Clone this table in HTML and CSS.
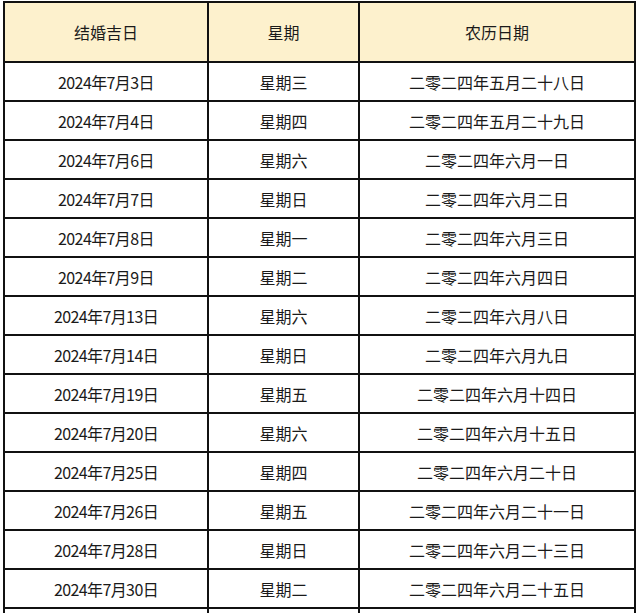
FILE: index.html
```html
<!DOCTYPE html>
<html lang="zh-CN">
<head>
<meta charset="utf-8">
<title>2024年7月结婚吉日</title>
<link rel="stylesheet" href="styles.css">
</head>
<body>
<table class="dates">
  <colgroup>
    <col class="col-date">
    <col class="col-week">
    <col class="col-lunar">
  </colgroup>
  <thead>
    <tr class="head-row">
      <th>结婚吉日</th>
      <th>星期</th>
      <th>农历日期</th>
    </tr>
  </thead>
  <tbody>
    <tr><td class="solar">2024年7月3日</td><td>星期三</td><td>二零二四年五月二十八日</td></tr>
    <tr><td class="solar">2024年7月4日</td><td>星期四</td><td>二零二四年五月二十九日</td></tr>
    <tr><td class="solar">2024年7月6日</td><td>星期六</td><td>二零二四年六月一日</td></tr>
    <tr><td class="solar">2024年7月7日</td><td>星期日</td><td>二零二四年六月二日</td></tr>
    <tr><td class="solar">2024年7月8日</td><td>星期一</td><td>二零二四年六月三日</td></tr>
    <tr><td class="solar">2024年7月9日</td><td>星期二</td><td>二零二四年六月四日</td></tr>
    <tr><td class="solar">2024年7月13日</td><td>星期六</td><td>二零二四年六月八日</td></tr>
    <tr><td class="solar">2024年7月14日</td><td>星期日</td><td>二零二四年六月九日</td></tr>
    <tr><td class="solar">2024年7月19日</td><td>星期五</td><td>二零二四年六月十四日</td></tr>
    <tr><td class="solar">2024年7月20日</td><td>星期六</td><td>二零二四年六月十五日</td></tr>
    <tr><td class="solar">2024年7月25日</td><td>星期四</td><td>二零二四年六月二十日</td></tr>
    <tr><td class="solar">2024年7月26日</td><td>星期五</td><td>二零二四年六月二十一日</td></tr>
    <tr><td class="solar">2024年7月28日</td><td>星期日</td><td>二零二四年六月二十三日</td></tr>
    <tr><td class="solar">2024年7月30日</td><td>星期二</td><td>二零二四年六月二十五日</td></tr>
    <tr><td></td><td></td><td></td></tr>
  </tbody>
</table>
</body>
</html>
```
FILE: styles.css
```css
html, body {
  margin: 0;
  padding: 0;
  background: #ffffff;
  overflow: hidden;
}

body {
  padding: 1px 0 0 3px;
  font-family: "Noto Sans CJK SC", "Noto Sans", sans-serif;
  font-size: 16px;
  color: #1a1a1a;
}

.dates {
  border-collapse: collapse;
  table-layout: fixed;
  width: 631px;
}

.col-date { width: 204px; }
.col-week { width: 151px; }
.col-lunar { width: 276px; }

.dates th,
.dates td {
  border: 2px solid #111111;
  padding: 0;
  text-align: center;
  vertical-align: middle;
  font-weight: 400;
  line-height: 20px;
}

.head-row th {
  height: 58px;
  background: #fdf1cd;
  font-size: 16px;
}

.dates td {
  height: 37px;
}

.dates td.solar {
  letter-spacing: -0.6px;
}
```
